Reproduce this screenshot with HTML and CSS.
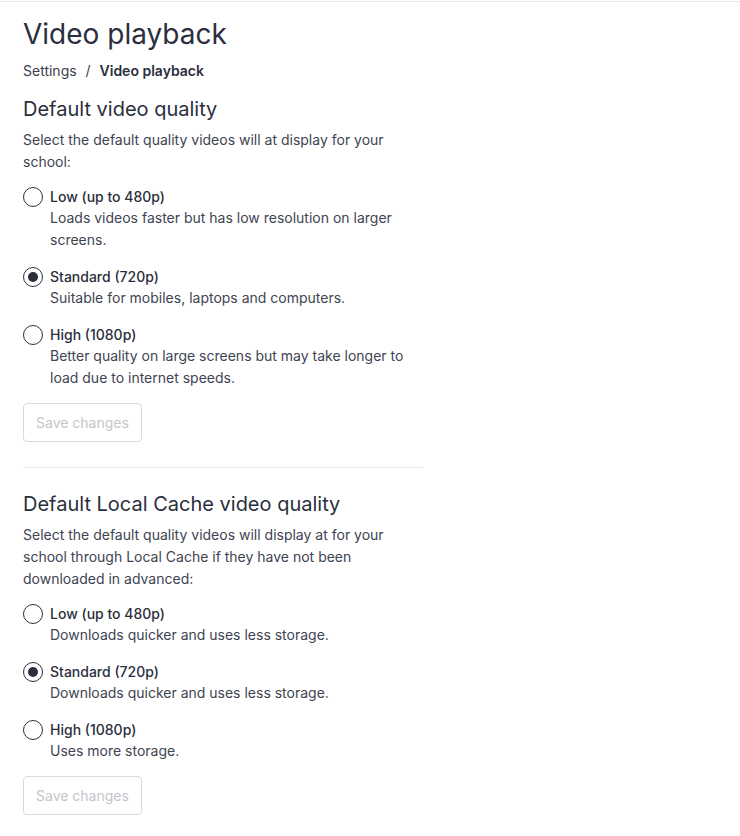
FILE: index.html
```html
<!DOCTYPE html>
<html lang="en">

<head>
  <meta charset="UTF-8">
  <meta name="viewport" content="width=device-width, initial-scale=1.0">
  <title>Video playback</title>
  <link rel="stylesheet" href="styles.css">
</head>

<body>
  <div class="page">
    <div class="content">
      <h1 class="page-title">Video playback</h1>
      <div class="breadcrumb">
        <span>Settings</span>
        <span class="sep">/</span>
        <strong>Video playback</strong>
      </div>

      <section class="setting">
        <h2>Default video quality</h2>
        <p class="intro">Select the default quality videos will at display for your school:</p>
        <div class="options">
          <label class="option">
            <input type="radio" name="quality">
            <span class="option-text">
              <span class="option-label">Low (up to 480p)</span>
              <span class="option-desc">Loads videos faster but has low resolution on larger screens.</span>
            </span>
          </label>
          <label class="option">
            <input type="radio" name="quality" checked>
            <span class="option-text">
              <span class="option-label">Standard (720p)</span>
              <span class="option-desc">Suitable for mobiles, laptops and computers.</span>
            </span>
          </label>
          <label class="option">
            <input type="radio" name="quality">
            <span class="option-text">
              <span class="option-label">High (1080p)</span>
              <span class="option-desc">Better quality on large screens but may take longer to load due to internet speeds.</span>
            </span>
          </label>
        </div>
        <button class="btn" disabled>Save changes</button>
      </section>

      <hr class="divider">

      <section class="setting">
        <h2>Default Local Cache video quality</h2>
        <p class="intro">Select the default quality videos will display at for your school through Local Cache if they have not been downloaded in advanced:</p>
        <div class="options">
          <label class="option">
            <input type="radio" name="cache">
            <span class="option-text">
              <span class="option-label">Low (up to 480p)</span>
              <span class="option-desc">Downloads quicker and uses less storage.</span>
            </span>
          </label>
          <label class="option">
            <input type="radio" name="cache" checked>
            <span class="option-text">
              <span class="option-label">Standard (720p)</span>
              <span class="option-desc">Downloads quicker and uses less storage.</span>
            </span>
          </label>
          <label class="option">
            <input type="radio" name="cache">
            <span class="option-text">
              <span class="option-label">High (1080p)</span>
              <span class="option-desc">Uses more storage.</span>
            </span>
          </label>
        </div>
        <button class="btn" disabled>Save changes</button>
      </section>
    </div>
  </div>
</body>

</html>
```

FILE: styles.css
```css
body {
  margin: 0;
  font-family: Inter, "Noto Sans", sans-serif;
  color: #2e3241;
  background: #fff;
}

.page {
  margin-top: 1px;
  border-top: 1px solid #e6e6e6;
  padding: 14px 23px 20px;
}

.content {
  width: 400px;
}

.page-title {
  margin: 0;
  font-size: 28px;
  line-height: 36px;
  font-weight: 400;
  color: #2b2f3d;
}

.breadcrumb {
  margin-top: 9px;
  font-size: 14px;
  line-height: 20px;
  color: #3a3e4b;
}

.breadcrumb .sep {
  margin: 0 5px;
}

.breadcrumb strong {
  font-weight: 600;
  color: #2b2f3d;
}

.setting h2 {
  margin: 14px 0 0;
  font-size: 20px;
  line-height: 28px;
  font-weight: 400;
  color: #2b2f3d;
}

.divider + .setting h2 {
  margin-top: 22px;
}

.intro {
  margin: 6px 0 0;
  font-size: 14px;
  line-height: 22px;
  color: #404452;
}

.options {
  display: flex;
  flex-direction: column;
  gap: 16px;
  margin-top: 14px;
}

.option {
  display: flex;
  align-items: flex-start;
  gap: 7px;
  cursor: pointer;
}

.option input {
  appearance: none;
  -webkit-appearance: none;
  margin: 0;
  width: 20px;
  height: 20px;
  border: 1.5px solid #2b2f3d;
  border-radius: 50%;
  box-sizing: border-box;
  display: grid;
  place-items: center;
  flex-shrink: 0;
}

.option input:checked::after {
  content: "";
  width: 10px;
  height: 10px;
  border-radius: 50%;
  background: #2b2f3d;
}

.option-text {
  display: flex;
  flex-direction: column;
}

.option-label {
  font-size: 14px;
  line-height: 20px;
  font-weight: 500;
  color: #2b2f3d;
}

.option-desc {
  font-size: 14px;
  line-height: 22px;
  color: #404452;
}

.btn {
  margin-top: 14px;
  padding: 0 12px;
  height: 39px;
  font-family: inherit;
  font-size: 14px;
  color: #c4c5ca;
  background: #fff;
  border: 1px solid #d9dadd;
  border-radius: 4px;
}

.divider {
  margin: 25px 0 0;
  border: none;
  border-top: 1px solid #e8e8ea;
}
```
